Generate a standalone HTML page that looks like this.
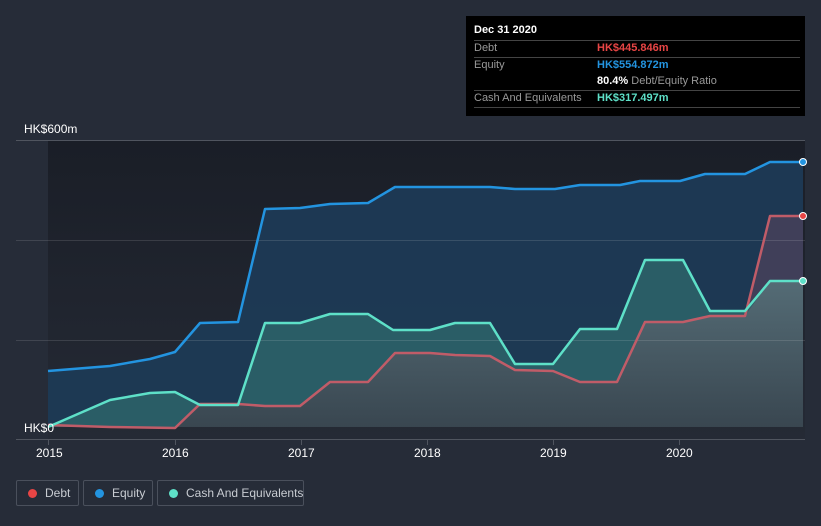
<!DOCTYPE html>
<html><head><meta charset="utf-8"><style>
body{margin:0;width:821px;height:526px;background:#262c38;font-family:"Liberation Sans",sans-serif;overflow:hidden;position:relative}
.tt{position:absolute;left:466px;top:16px;width:339px;height:100px;background:#000;color:#fff;font-size:11px}
.tt .r{position:absolute;left:8px;right:5px;border-top:1px solid #444}
.tt span{position:absolute;white-space:nowrap}
.leg{position:absolute;top:480px;height:26px;border:1px solid #4a505c;border-radius:2px;color:#c8ccd2;font-size:12px;line-height:24px;box-sizing:border-box;white-space:nowrap}
.leg i{position:absolute;left:11px;top:8px;width:9px;height:9px;border-radius:50%}
.leg span{position:absolute;left:28px;top:0;white-space:nowrap}
.lab{position:absolute;color:#fff;font-size:12px;white-space:nowrap}
</style></head><body>
<svg width="821" height="526" style="position:absolute;left:0;top:0">
<defs>
<linearGradient id="bg" x1="0" y1="0" x2="0" y2="1"><stop offset="0" stop-color="#1a1e27"/><stop offset="1" stop-color="#252a35"/></linearGradient>
<linearGradient id="gr" x1="0" y1="0" x2="0" y2="1"><stop offset="0" stop-color="#5a6e78"/><stop offset="1" stop-color="#3a424c"/></linearGradient>
</defs>
<rect x="48" y="140" width="757" height="300" fill="url(#bg)"/>
<polygon fill="#1e3a55" opacity="0.95" points="48,371 110,366 150,359 175,352 200,323 238,322 265,209 300,208 330,204 368,203 395,187 490,187 515,189 555,189 580,185 620,185 640,181 680,181 705,174 745,174 770,162 803,162 803,427 48,427"/>
<polygon fill="#45405a" opacity="0.9" points="48,425 110,427 175,428 200,404 238,404 265,406 300,406 330,382 368,382 395,353 430,353 455,355 490,356 515,370 553,371 580,382 617,382 645,322 683,322 710,316 745,316 770,216 803,216 803,427 48,427"/>
<polygon fill="#2f6a6c" opacity="0.75" points="48,427 110,400 150,393 175,392 200,405 238,405 265,323 300,323 330,314 368,314 393,330 430,330 455,323 490,323 515,364 553,364 580,329 617,329 645,260 683,260 710,311 745,311 770,281 803,281 803,427 48,427"/>
<polygon fill="url(#gr)" opacity="0.85" points="48,427 110,427 175,428 200,405 238,405 265,406 300,406 330,382 368,382 395,353 430,353 455,355 490,356 515,370 553,371 580,382 617,382 645,322 683,322 710,316 745,316 770,281 803,281 803,427 48,427"/>
<g stroke="#ffffff" stroke-opacity="0.12" stroke-width="1"><line x1="16" y1="240.5" x2="805" y2="240.5"/><line x1="16" y1="340.5" x2="805" y2="340.5"/></g>
<line x1="16" y1="140.5" x2="805" y2="140.5" stroke="#50555f"/>
<line x1="16" y1="439.5" x2="805" y2="439.5" stroke="#50555f"/>
<g stroke="#50555f"><line x1="48.5" y1="440" x2="48.5" y2="445"/><line x1="175.5" y1="440" x2="175.5" y2="445"/><line x1="301.5" y1="440" x2="301.5" y2="445"/><line x1="427.5" y1="440" x2="427.5" y2="445"/><line x1="553.5" y1="440" x2="553.5" y2="445"/><line x1="679.5" y1="440" x2="679.5" y2="445"/></g>
<g fill="none" stroke-width="2.5" stroke-linejoin="round">
<polyline stroke="#2394e0" points="48,371 110,366 150,359 175,352 200,323 238,322 265,209 300,208 330,204 368,203 395,187 490,187 515,189 555,189 580,185 620,185 640,181 680,181 705,174 745,174 770,162 803,162"/>
<polyline stroke="#c05c68" points="48,425 110,427 175,428 200,404 238,404 265,406 300,406 330,382 368,382 395,353 430,353 455,355 490,356 515,370 553,371 580,382 617,382 645,322 683,322 710,316 745,316 770,216 803,216"/>
<polyline stroke="#5ee0c8" points="48,427 110,400 150,393 175,392 200,405 238,405 265,323 300,323 330,314 368,314 393,330 430,330 455,323 490,323 515,364 553,364 580,329 617,329 645,260 683,260 710,311 745,311 770,281 803,281"/>
</g>
<circle cx="803" cy="162" r="3.5" fill="#2394e0" stroke="#fff"/>
<circle cx="803" cy="216" r="3.5" fill="#e84545" stroke="#fff"/>
<circle cx="803" cy="281" r="3.5" fill="#5ee0c8" stroke="#fff"/>
</svg>
<div class="lab" style="left:24px;top:122px">HK$600m</div>
<div class="lab" style="left:24px;top:421px">HK$0</div>
<div class="lab" style="left:36px;top:446px">2015</div>
<div class="lab" style="left:162px;top:446px">2016</div>
<div class="lab" style="left:288px;top:446px">2017</div>
<div class="lab" style="left:414px;top:446px">2018</div>
<div class="lab" style="left:540px;top:446px">2019</div>
<div class="lab" style="left:666px;top:446px">2020</div>
<div class="tt">
<span style="left:8px;top:8px;font-weight:bold">Dec 31 2020</span>
<div class="r" style="top:24px"></div>
<span style="left:8px;top:26px;color:#999">Debt</span><span style="left:131px;top:26px;color:#e84545;font-weight:bold">HK$445.846m</span>
<div class="r" style="top:41px"></div>
<span style="left:8px;top:43px;color:#999">Equity</span><span style="left:131px;top:43px;color:#2394e0;font-weight:bold">HK$554.872m</span>
<span style="left:131px;top:59px"><b>80.4%</b> <span style="position:static;color:#999">Debt/Equity Ratio</span></span>
<div class="r" style="top:74px"></div>
<span style="left:8px;top:76px;color:#999">Cash And Equivalents</span><span style="left:131px;top:76px;color:#5ee0c8;font-weight:bold">HK$317.497m</span>
<div class="r" style="top:91px"></div>
</div>
<div class="leg" style="left:16px;width:63px"><i style="background:#e84545"></i><span>Debt</span></div>
<div class="leg" style="left:83px;width:70px"><i style="background:#2394e0"></i><span>Equity</span></div>
<div class="leg" style="left:157px;width:147px"><i style="background:#5ee0c8"></i><span>Cash And Equivalents</span></div>
</body></html>
